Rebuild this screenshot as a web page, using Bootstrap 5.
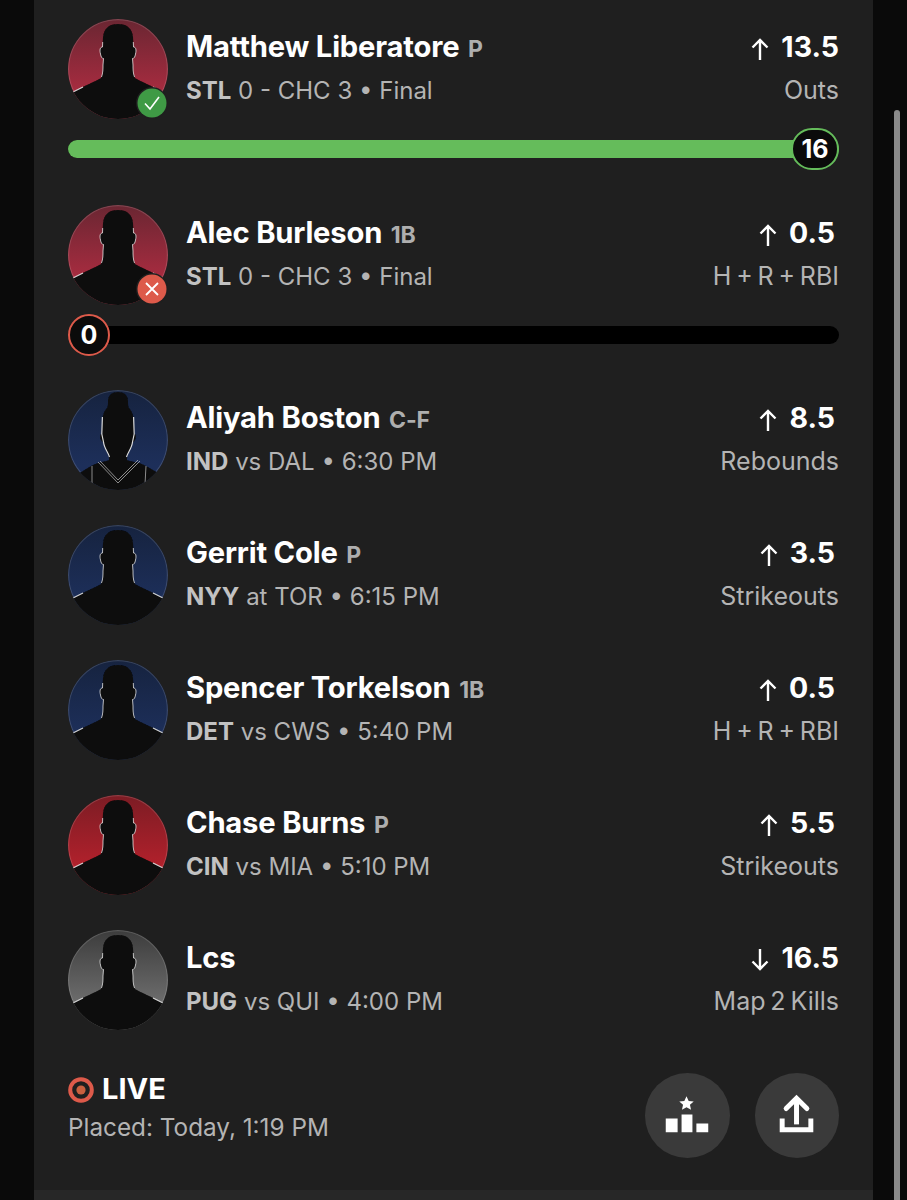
<!DOCTYPE html>
<html lang="en">
<head>
<meta charset="UTF-8">
<meta name="viewport" content="width=device-width, initial-scale=1.0">
<title>Lineup</title>
<link href="https://cdn.jsdelivr.net/npm/bootstrap@5.3.0/dist/css/bootstrap.min.css" rel="stylesheet">
<style>
    body {
        background-color: #0a0a0a;
        font-family: "Inter", "Liberation Sans", sans-serif;
        height: 1200px;
        overflow: hidden;
        margin: 0;
    }
    .slip-panel {
        background-color: #1f1f1f;
        margin: 0 34px;
        padding: 19px 34px 0 34px;
        height: 1190px;
    }
    .scroll-thumb {
        position: absolute;
        left: 894px;
        top: 110px;
        width: 6px;
        height: 1090px;
        border-radius: 3px 3px 0 0;
        background-color: #8a8a8a;
    }
    .bottom-strip {
        height: 10px;
        margin: 0 34px;
        background-color: #272727;
    }
    .pick-row { height: 100px; margin-bottom: 35px; }
    .pick-row.has-progress { margin-bottom: 9px; }
    .avatar-wrap { position: relative; width: 100px; height: 100px; flex: none; margin-right: 18px; }
    .avatar-wrap svg.face { display: block; }
    .status-badge {
        position: absolute;
        right: 0;
        bottom: 0;
        width: 32px;
        height: 32px;
    }
    .pick-info { padding-top: 9px; }
    .pick-name { height: 38px; font-size: 29.2px; font-weight: 700; color: #fff; line-height: 38px; letter-spacing: -0.2px; white-space: nowrap; }
    .pick-pos { font-size: 23px; font-weight: 700; color: #aeaeae; margin-left: 2px; }
    .pick-sub { height: 38px; font-size: 24px; font-weight: 400; color: #b4b4b4; line-height: 38px; margin-top: 6px; white-space: nowrap; }
    .pick-sub b { font-weight: 700; color: #c2c2c2; }
    .market-label { font-size: 25px; word-spacing: -2.2px; margin-top: 5px; }
    .pick-value { height: 38px; font-size: 28.5px; font-weight: 700; color: #fff; line-height: 38px; }
    .pick-value svg { margin-right: 12px; vertical-align: -3px; }
    .value-box { margin-right: 4px; }
    .result-track { position: relative; height: 42px; margin-bottom: 34.5px; }
    .result-track .progress {
        position: absolute;
        left: 0;
        right: 0;
        top: 12px;
        height: 18px;
        border-radius: 9px;
        background-color: #000;
    }
    .result-track .progress-bar { background-color: #65bc5b; }
    .result-knob {
        position: absolute;
        top: 0;
        height: 42px;
        border-radius: 21px;
        border: 2px solid;
        background-color: #0b0b0b;
        color: #fff;
        font-size: 25px;
        font-weight: 700;
        line-height: 38px;
        text-align: center;
    }
    .knob-win { right: 0; width: 48px; border-color: #65bc5b; }
    .knob-loss { left: 0; width: 42px; border-color: #dd5a4a; }
    .slip-foot { margin-top: 40px; }
    .live-label { height: 38px; font-size: 29px; font-weight: 700; color: #fff; line-height: 38px; }
    .live-label svg { margin-right: 8px; vertical-align: -4px; }
    .placed-text { font-size: 24.3px; font-weight: 400; color: #b4b4b4; line-height: 38px; }
    .foot-actions { gap: 25px; margin-top: 3px; }
    .round-btn {
        width: 84.5px;
        height: 84.5px;
        padding: 0;
        border: 0;
        border-radius: 50%;
        background-color: #3a3a3a;
    }
</style>
</head>
<body>
<svg width="0" height="0" class="position-absolute">
    <defs>
        <linearGradient id="bgRed" x1="0" y1="0" x2="0" y2="1"><stop offset="0" stop-color="#6a2632"/><stop offset="0.75" stop-color="#a92c40"/></linearGradient>
        <linearGradient id="bgFire" x1="0" y1="0" x2="0" y2="1"><stop offset="0" stop-color="#7c1c24"/><stop offset="0.75" stop-color="#b4212c"/></linearGradient>
        <linearGradient id="bgNavy" x1="0" y1="0" x2="0" y2="1"><stop offset="0" stop-color="#16233f"/><stop offset="0.75" stop-color="#1d2f5a"/></linearGradient>
        <linearGradient id="bgGrey" x1="0" y1="0" x2="0" y2="1"><stop offset="0" stop-color="#3c3c3c"/><stop offset="0.75" stop-color="#6e6e6e"/></linearGradient>
        <filter id="softEdge" x="-5%" y="-5%" width="110%" height="110%"><feGaussianBlur stdDeviation="0.5"/></filter>
        <clipPath id="circleClip"><circle cx="50" cy="50" r="50"/></clipPath>
        <circle id="rimLine" cx="50" cy="50" r="49.4" fill="none" stroke="#fff" stroke-opacity=".14" stroke-width="1.2"/>
        <g id="maleBust" filter="url(#softEdge)">
            <path fill="#0a0a0a" d="M50 5C41 5 36 9 35 18L34.5 28C32 28 31.5 31 32.5 35C33 38 34 39.5 35.5 39.5L35 46C35 50 35 54 33 59C26 63 18 66 5 73L0 100H100L95 73C82 66 74 63 67 59C65 54 65 50 65 46L64.5 39.5C66 39.5 67 38 67.5 35C68.5 31 68 28 65.5 28L65 18C64 9 59 5 50 5Z"/>
            <path fill="none" stroke="#f0f0f0" stroke-opacity=".75" stroke-width="1" d="M34.7 23L34.5 28C32 28 31.5 31 32.5 35C33 38 34 39.5 35.5 39.5L35 46C35 50 35 54 33.5 58M65.3 23L65.5 28C68 28 68.5 31 67.5 35C67 38 66 39.5 64.5 39.5L65 46C65 50 65 54 66.5 58"/>
            <path fill="none" stroke="#f0f0f0" stroke-opacity=".85" stroke-width="1.3" d="M5 73L15 68M95 73L85 68"/>
        </g>
        <g id="femaleBust" filter="url(#softEdge)">
            <path fill="#0a0a0a" d="M50 2C43 2 40 6 40 11C40 14 40 16 39 18C36 21 34 26 34 34L33.5 44C32 44 31.5 47 33 50C34 52 35 52 35.5 52C36 58 40 62 41 68L41 70C36 72 30 72 23 76L10 84L20 100H80L92 84L78 76C72 72 64 72 59 70L59 68C60 62 64 58 64.5 52C65 52 66 52 67 50C68.5 47 68 44 66.5 44L66 34C66 26 64 21 61 18C60 16 60 14 60 11C60 6 57 2 50 2Z"/>
            <path fill="none" stroke="#f0f0f0" stroke-opacity=".9" stroke-width="1.2" d="M34.4 27L33.8 44L35.5 52C36 58 40 62 41.5 67M65.6 27L66.2 44L64.5 52C64 58 60 62 58.5 67"/>
            <path fill="none" stroke="#c4c4c4" stroke-opacity=".7" stroke-width="1" d="M30 72L50 93L72 71M32 71L50 90L70 70M24 76L24 94M78 76L77 94"/>
        </g>
        <symbol id="arrowUp" viewBox="0 0 18 22"><path fill="none" stroke="#fff" stroke-width="2.4" d="M9 22V2M1.5 9.5L9 2L16.5 9.5"/></symbol>
        <symbol id="arrowDown" viewBox="0 0 18 22"><path fill="none" stroke="#fff" stroke-width="2.4" d="M9 0V20M1.5 12.5L9 20L16.5 12.5"/></symbol>
    </defs>
</svg>

<div class="slip-panel">

    <div class="pick-row has-progress d-flex">
        <div class="avatar-wrap">
            <svg class="face" width="100" height="100" viewBox="0 0 100 100"><g clip-path="url(#circleClip)"><rect width="100" height="100" fill="url(#bgRed)"/><use href="#rimLine"/><use href="#maleBust"/></g></svg>
            <svg class="status-badge" viewBox="0 0 32 32"><circle cx="16" cy="16" r="16" fill="#1f1f1f"/><circle cx="16" cy="16" r="14.5" fill="#3f9a45"/><path fill="none" stroke="#fff" stroke-width="1.6" d="M9 16.5L14 22L23 10"/></svg>
        </div>
        <div class="pick-info flex-grow-1">
            <div class="pick-name">Matthew Liberatore <span class="pick-pos">P</span></div>
            <div class="pick-sub"><b>STL</b> 0 - CHC 3 • Final</div>
        </div>
        <div class="pick-info text-end">
            <div class="pick-value"><svg width="18" height="22"><use href="#arrowUp"/></svg>13.5</div>
            <div class="pick-sub market-label">Outs</div>
        </div>
    </div>
    <div class="result-track">
        <div class="progress"><div class="progress-bar" style="width: 100%"></div></div>
        <div class="result-knob knob-win">16</div>
    </div>

    <div class="pick-row has-progress d-flex">
        <div class="avatar-wrap">
            <svg class="face" width="100" height="100" viewBox="0 0 100 100"><g clip-path="url(#circleClip)"><rect width="100" height="100" fill="url(#bgRed)"/><use href="#rimLine"/><use href="#maleBust"/></g></svg>
            <svg class="status-badge" viewBox="0 0 32 32"><circle cx="16" cy="16" r="16" fill="#1f1f1f"/><circle cx="16" cy="16" r="14.5" fill="#dd5a4a"/><path fill="none" stroke="#fff" stroke-width="1.8" d="M10 10L22 22M22 10L10 22"/></svg>
        </div>
        <div class="pick-info flex-grow-1">
            <div class="pick-name">Alec Burleson <span class="pick-pos">1B</span></div>
            <div class="pick-sub"><b>STL</b> 0 - CHC 3 • Final</div>
        </div>
        <div class="pick-info text-end">
            <div class="pick-value value-box"><svg width="18" height="22"><use href="#arrowUp"/></svg>0.5</div>
            <div class="pick-sub market-label">H + R + RBI</div>
        </div>
    </div>
    <div class="result-track">
        <div class="progress"></div>
        <div class="result-knob knob-loss">0</div>
    </div>

    <div class="pick-row d-flex">
        <div class="avatar-wrap">
            <svg class="face" width="100" height="100" viewBox="0 0 100 100"><g clip-path="url(#circleClip)"><rect width="100" height="100" fill="url(#bgNavy)"/><use href="#rimLine"/><use href="#femaleBust"/></g></svg>
        </div>
        <div class="pick-info flex-grow-1">
            <div class="pick-name">Aliyah Boston <span class="pick-pos">C-F</span></div>
            <div class="pick-sub"><b>IND</b> vs DAL • 6:30 PM</div>
        </div>
        <div class="pick-info text-end">
            <div class="pick-value value-box"><svg width="18" height="22"><use href="#arrowUp"/></svg>8.5</div>
            <div class="pick-sub market-label">Rebounds</div>
        </div>
    </div>

    <div class="pick-row d-flex">
        <div class="avatar-wrap">
            <svg class="face" width="100" height="100" viewBox="0 0 100 100"><g clip-path="url(#circleClip)"><rect width="100" height="100" fill="url(#bgNavy)"/><use href="#rimLine"/><use href="#maleBust"/></g></svg>
        </div>
        <div class="pick-info flex-grow-1">
            <div class="pick-name">Gerrit Cole <span class="pick-pos">P</span></div>
            <div class="pick-sub"><b>NYY</b> at TOR • 6:15 PM</div>
        </div>
        <div class="pick-info text-end">
            <div class="pick-value value-box"><svg width="18" height="22"><use href="#arrowUp"/></svg>3.5</div>
            <div class="pick-sub market-label">Strikeouts</div>
        </div>
    </div>

    <div class="pick-row d-flex">
        <div class="avatar-wrap">
            <svg class="face" width="100" height="100" viewBox="0 0 100 100"><g clip-path="url(#circleClip)"><rect width="100" height="100" fill="url(#bgNavy)"/><use href="#rimLine"/><use href="#maleBust"/></g></svg>
        </div>
        <div class="pick-info flex-grow-1">
            <div class="pick-name">Spencer Torkelson <span class="pick-pos">1B</span></div>
            <div class="pick-sub"><b>DET</b> vs CWS • 5:40 PM</div>
        </div>
        <div class="pick-info text-end">
            <div class="pick-value value-box"><svg width="18" height="22"><use href="#arrowUp"/></svg>0.5</div>
            <div class="pick-sub market-label">H + R + RBI</div>
        </div>
    </div>

    <div class="pick-row d-flex">
        <div class="avatar-wrap">
            <svg class="face" width="100" height="100" viewBox="0 0 100 100"><g clip-path="url(#circleClip)"><rect width="100" height="100" fill="url(#bgFire)"/><use href="#rimLine"/><use href="#maleBust"/></g></svg>
        </div>
        <div class="pick-info flex-grow-1">
            <div class="pick-name">Chase Burns <span class="pick-pos">P</span></div>
            <div class="pick-sub"><b>CIN</b> vs MIA • 5:10 PM</div>
        </div>
        <div class="pick-info text-end">
            <div class="pick-value value-box"><svg width="18" height="22"><use href="#arrowUp"/></svg>5.5</div>
            <div class="pick-sub market-label">Strikeouts</div>
        </div>
    </div>

    <div class="pick-row d-flex">
        <div class="avatar-wrap">
            <svg class="face" width="100" height="100" viewBox="0 0 100 100"><g clip-path="url(#circleClip)"><rect width="100" height="100" fill="url(#bgGrey)"/><use href="#rimLine"/><use href="#maleBust"/></g></svg>
        </div>
        <div class="pick-info flex-grow-1">
            <div class="pick-name">Lcs</div>
            <div class="pick-sub"><b>PUG</b> vs QUI • 4:00 PM</div>
        </div>
        <div class="pick-info text-end">
            <div class="pick-value"><svg width="18" height="22"><use href="#arrowDown"/></svg>16.5</div>
            <div class="pick-sub market-label">Map 2 Kills</div>
        </div>
    </div>

    <div class="slip-foot d-flex justify-content-between align-items-start">
        <div>
            <div class="live-label"><svg width="26" height="26" viewBox="0 0 26 26"><circle cx="13" cy="13" r="10.8" fill="none" stroke="#dd5a4a" stroke-width="4"/><circle cx="13" cy="13" r="4.6" fill="#c9603f"/></svg>LIVE</div>
            <div class="placed-text">Placed: Today, 1:19 PM</div>
        </div>
        <div class="foot-actions d-flex">
            <button class="btn round-btn" type="button">
                <svg width="84" height="84" viewBox="0 0 85 85"><path fill="#fff" d="M42 23.5L44.2 28.3L49.3 28.8L45.5 32.2L46.6 37.3L42 34.6L37.4 37.3L38.5 32.2L34.7 28.8L39.8 28.3Z"/><path fill="#fff" d="M21 46H33V60H21ZM37 42H48V60H37ZM52 51H64V60H52Z"/></svg>
            </button>
            <button class="btn round-btn" type="button">
                <svg width="84" height="84" viewBox="0 0 85 85"><path fill="none" stroke="#fff" stroke-width="5" d="M42 52V26"/><path fill="none" stroke="#fff" stroke-width="5" stroke-linecap="round" d="M31.5 36L42 25.5L52.5 36"/><path fill="none" stroke="#fff" stroke-width="5" d="M27.5 46V57.5H56.5V46"/></svg>
            </button>
        </div>
    </div>
</div>
<div class="bottom-strip"></div>
<div class="scroll-thumb"></div>

<script src="https://cdn.jsdelivr.net/npm/bootstrap@5.3.0/dist/js/bootstrap.bundle.min.js"></script>
</body>
</html>
